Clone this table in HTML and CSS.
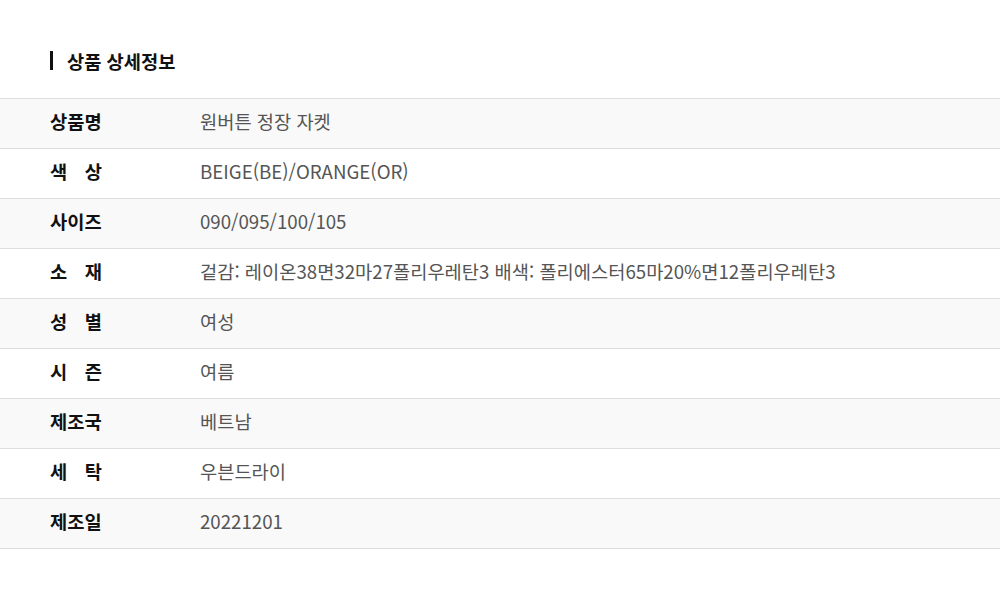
FILE: index.html
```html
<!DOCTYPE html>
<html lang="ko">
<head>
  <meta charset="UTF-8">
  <title>상품 상세정보</title>
  <link rel="stylesheet" href="styles.css">
</head>
<body>
  <div class="detail">
    <h2 class="detail-title">상품 상세정보</h2>

    <table class="detail-table">
      <tbody>
        <tr><th><span class="label">상품명</span></th><td>원버튼 정장 자켓</td></tr>
        <tr><th><span class="label">색 상</span></th><td>BEIGE(BE)/ORANGE(OR)</td></tr>
        <tr><th><span class="label">사이즈</span></th><td>090/095/100/105</td></tr>
        <tr><th><span class="label">소 재</span></th><td>겉감: 레이온38면32마27폴리우레탄3 배색: 폴리에스터65마20%면12폴리우레탄3</td></tr>
        <tr><th><span class="label">성 별</span></th><td>여성</td></tr>
        <tr><th><span class="label">시 즌</span></th><td>여름</td></tr>
        <tr><th><span class="label">제조국</span></th><td>베트남</td></tr>
        <tr><th><span class="label">세 탁</span></th><td>우븐드라이</td></tr>
        <tr><th><span class="label">제조일</span></th><td>20221201</td></tr>
      </tbody>
    </table>
  </div>
</body>
</html>
```

FILE: styles.css
```css
body {
  margin: 0;
  background: #fff;
  font-family: "Noto Sans CJK KR", "Noto Sans", sans-serif;
  color: #222;
}

.detail {
  padding-top: 51px;
}

.detail-title {
  margin: 0 0 28px 50px;
  padding-left: 14px;
  border-left: 3px solid #111;
  font-size: 18.7px;
  font-weight: 700;
  line-height: 19px;
  color: #111;
}

.detail-table {
  width: 100%;
  border-collapse: collapse;
  border-top: 1px solid #ddd;
}

.detail-table tr {
  border-bottom: 1px solid #ddd;
}

.detail-table tr:nth-child(odd) {
  background-color: #f9f9f9;
}

.detail-table th,
.detail-table td {
  height: 44px;
  padding: 0 0 5px;
  text-align: left;
  vertical-align: middle;
  font-size: 18.7px;
  line-height: 24px;
}

.detail-table th {
  width: 150px;
  padding-left: 50px;
  font-weight: 700;
  color: #111;
}

.label {
  display: inline-block;
  width: 52px;
  text-align: justify;
  text-align-last: justify;
}

.detail-table td {
  font-weight: 400;
  color: #555;
}
```
